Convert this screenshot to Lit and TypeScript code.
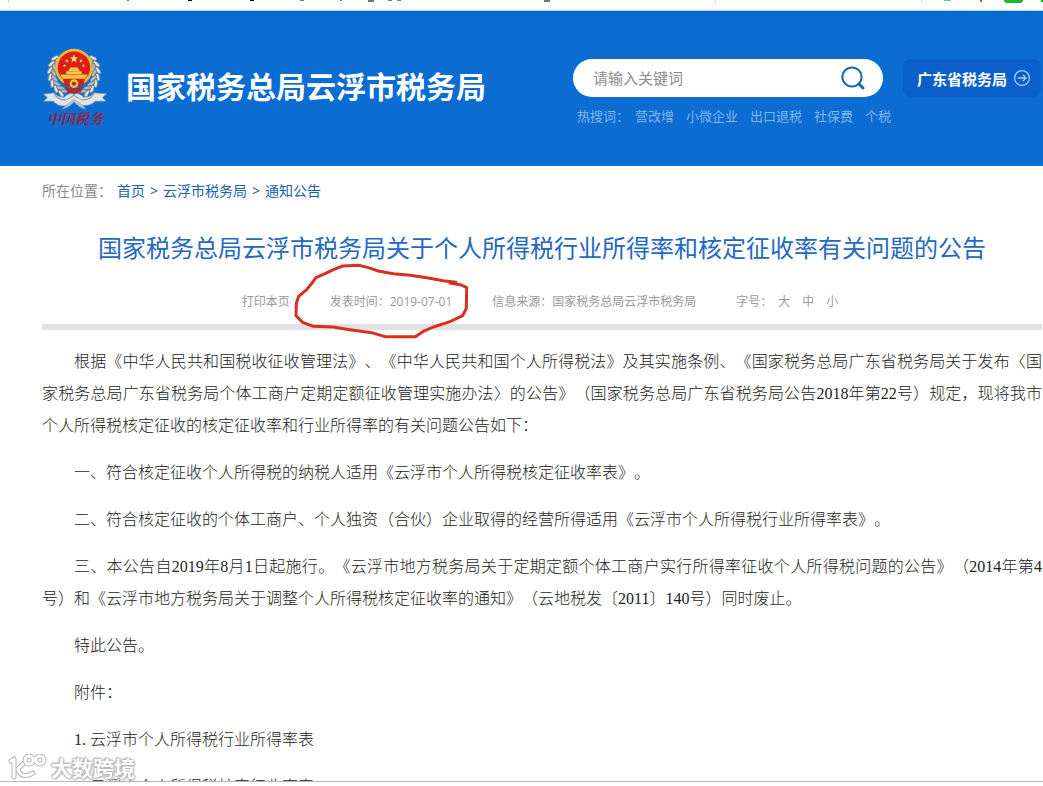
import { LitElement, html, css, svg } from "lit";
import { customElement } from "lit/decorators.js";

const HOT_WORDS = ["营改增", "小微企业", "出口退税", "社保费", "个税"];

const PARAGRAPHS = [
  "根据《中华人民共和国税收征收管理法》、《中华人民共和国个人所得税法》及其实施条例、《国家税务总局广东省税务局关于发布〈国家税务总局广东省税务局个体工商户定期定额征收管理实施办法〉的公告》（国家税务总局广东省税务局公告2018年第22号）规定，现将我市个人所得税核定征收的核定征收率和行业所得率的有关问题公告如下：",
  "一、符合核定征收个人所得税的纳税人适用《云浮市个人所得税核定征收率表》。",
  "二、符合核定征收的个体工商户、个人独资（合伙）企业取得的经营所得适用《云浮市个人所得税行业所得率表》。",
  "三、本公告自2019年8月1日起施行。《云浮市地方税务局关于定期定额个体工商户实行所得率征收个人所得税问题的公告》（2014年第4号）和《云浮市地方税务局关于调整个人所得税核定征收率的通知》（云地税发〔2011〕140号）同时废止。",
  "特此公告。",
  "附件：",
  "1. 云浮市个人所得税行业所得率表",
  "2. 云浮市个人所得税核定征收率表",
];

const star = (cx: number, cy: number, r: number) => {
  const pts: string[] = [];
  for (let i = 0; i < 10; i++) {
    const a = -Math.PI / 2 + (i * Math.PI) / 5;
    const q = i % 2 ? r * 0.42 : r;
    pts.push(`${(cx + q * Math.cos(a)).toFixed(1)},${(cy + q * Math.sin(a)).toFixed(1)}`);
  }
  return svg`<polygon points=${pts.join(" ")} fill="#ffe36a"/>`;
};

const leaf = (deg: number, r: number, tilt: number, fill: string) => {
  const a = (deg * Math.PI) / 180;
  const x = 133 + r * Math.cos(a);
  const y = 114 + r * Math.sin(a);
  return svg`<ellipse cx=${x.toFixed(1)} cy=${y.toFixed(1)} rx="12" ry="5" fill=${fill} stroke="#6d7c8c" stroke-width="2"
    transform=${`rotate(${deg + tilt} ${x.toFixed(1)} ${y.toFixed(1)})`}/>`;
};

@customElement("tax-emblem")
export class TaxEmblem extends LitElement {
  static styles = css`
    :host { display: flex; flex-direction: column; align-items: center; }
    .badge { display: block; width: 66px; height: 62px; }
    .caption {
      font: italic bold 14px/16px "Noto Serif CJK SC", "Noto Sans CJK SC", serif;
      color: #98203c;
    }
  `;
  render() {
    const right = [-38, -22, -6, 10, 26, 42, 58];
    return html`
      <svg class="badge" viewBox="38 40 196 184" aria-hidden="true">
        ${right.map((d) => [
          leaf(d, 72, 65, "#e6e4d8"),
          leaf(180 - d, 72, -65, "#e6e4d8"),
          leaf(d + 6, 60, 120, "#b4bbc0"),
          leaf(174 - d, 60, -120, "#b4bbc0"),
        ])}
        <circle cx="133" cy="98" r="56" fill="#e9b93a"/>
        <circle cx="133" cy="98" r="48" fill="#dc1f16"/>
        ${star(133, 72, 13)} ${star(112, 78, 6)} ${star(154, 78, 6)}
        ${star(105, 92, 5)} ${star(161, 92, 5)}
        <path d="M116 108 L122 98 H144 L150 108 Z M110 109 H156 V117 H110 Z" fill="#f5c94a"/>
        <path d="M92 119 H174 L167 131 H99 Z" fill="#f3c545"/>
        <path d="M100 133 Q133 158 166 133 L160 150 Q133 164 106 150 Z" fill="#c8201a"/>
        <circle cx="133" cy="146" r="13" fill="#efc04a"/>
        <circle cx="133" cy="146" r="6" fill="#c8201a"/>
        <path d="M106 154 Q133 168 160 154 L154 170 Q133 178 112 170 Z" fill="#c22019"/>
        <path d="M42 177 L74 173 Q84 186 104 186 Q120 170 133 178 Q146 170 162 186 Q184 186 192 173 L230 176 L218 187 L228 198 L196 198 Q180 214 158 210 Q144 206 133 194 Q122 206 108 212 Q84 214 72 198 L42 198 L54 187 Z"
          fill="#dfe4e8" stroke="#7a8a99" stroke-width="2"/>
        <path d="M74 175 Q84 194 108 194 Q122 190 133 180 Q144 190 158 194 Q182 194 192 175" fill="none" stroke="#8b97a3" stroke-width="3"/>
        <path d="M108 212 Q124 196 133 194 Q142 196 158 210 L170 222 Q146 216 133 200 Q120 216 96 222 Z" fill="#bcc5cd" stroke="#7a8a99"/>
      </svg>
      <span class="caption">中国税务</span>
    `;
  }
}

@customElement("site-header")
export class SiteHeader extends LitElement {
  static styles = css`
    :host { display: block; background: #0b6cd1; color: #fff; }
    .bar {
      display: flex; align-items: flex-start; justify-content: space-between;
      gap: 20px; padding: 37px 2px 40px 42px;
    }
    .brand { display: flex; align-items: center; gap: 18px; }
    .name { margin: 0; font-size: 30px; line-height: 40px; font-weight: 700; white-space: nowrap; }
    .tools { display: flex; align-items: flex-start; gap: 20px; padding-top: 11px; }
    .finder { width: 310px; }
    .search {
      display: flex; align-items: center; height: 38px; box-sizing: border-box;
      padding: 0 16px 0 20px; border-radius: 19px; background: #fff;
    }
    .field {
      flex: 1; min-width: 0; border: 0; padding: 0; outline: 0; background: none;
      font: inherit; font-size: 15px; line-height: 24px; color: #333;
    }
    .field::placeholder { color: #8c8c8c; opacity: 1; }
    .go { display: flex; border: 0; padding: 0; background: none; cursor: pointer; }
    .go svg { width: 28px; height: 28px; }
    .hot {
      display: flex; gap: 12px; margin-top: 9px; padding-left: 4px;
      font-size: 13px; line-height: 20px; color: #82b7ec; white-space: nowrap;
    }
    .hot span { margin-right: -6px; }
    .hot a { color: inherit; text-decoration: none; }
    .province {
      display: flex; align-items: center; gap: 6px; height: 38px; padding: 0 10px 0 14px;
      border-radius: 8px; background: #0a5fca; color: #fff; text-decoration: none;
      font-size: 15px; font-weight: 700; white-space: nowrap;
    }
    .province svg { width: 18px; height: 18px; }
  `;
  render() {
    return html`
      <header class="bar">
        <div class="brand">
          <tax-emblem></tax-emblem>
          <p class="name">国家税务总局云浮市税务局</p>
        </div>
        <div class="tools">
          <div class="finder">
            <form class="search" @submit=${(e: Event) => e.preventDefault()}>
              <input class="field" type="text" aria-label="请输入关键词" placeholder="请输入关键词" />
              <button class="go" type="submit" aria-label="搜索">
                <svg viewBox="0 0 28 28" fill="none" stroke="#1668b8">
                  <circle cx="13" cy="13" r="9.6" stroke-width="2"/>
                  <path d="M20 20 L24 24" stroke-width="3" stroke-linecap="round"/>
                </svg>
              </button>
            </form>
            <nav class="hot"><span>热搜词：</span>${HOT_WORDS.map((w) => html`<a href="#">${w}</a>`)}</nav>
          </div>
          <a class="province" href="#">广东省税务局
            <svg viewBox="0 0 18 18" fill="none" stroke="#a9d0f7" stroke-width="1.3" aria-hidden="true">
              <circle cx="9" cy="9" r="7.4"/><path d="M4.8 9 H13 M10 6 L13 9 L10 12"/>
            </svg>
          </a>
        </div>
      </header>
    `;
  }
}

@customElement("notice-article")
export class NoticeArticle extends LitElement {
  static styles = css`
    :host { display: block; padding: 15px 1px 0 42px; }
    a { color: inherit; text-decoration: none; }
    .crumbs { display: flex; gap: 5px; font-size: 14px; line-height: 20px; color: #1b62a8; }
    .where { color: #8a8a8a; }
    .title {
      margin: 29px 0 26px; text-align: center; font-size: 24px; line-height: 36px;
      font-weight: 400; color: #2468bf;
    }
    .meta {
      display: flex; justify-content: center; gap: 40px; padding: 0 4px 12px 0;
      border-bottom: 6px solid #e2e2e2; font-size: 12px; line-height: 20px; color: #999;
    }
    .print, .size {
      border: 0; padding: 0; background: none; font: inherit; color: inherit; cursor: pointer;
    }
    .sizes { display: flex; gap: 12px; }
    .sizes span { margin-right: -6px; }
    .date { position: relative; }
    .ring {
      position: absolute; left: -36px; top: -28px; width: 176px; height: 75px;
      overflow: visible; pointer-events: none;
    }
    .text {
      padding-top: 16px; color: #222; font: 16px/32px "Liberation Serif", "Noto Sans CJK SC", serif;
      font-weight: 300;
    }
    .text p { margin: 0 0 15px; text-indent: 2em; text-align: justify; }
  `;
  render() {
    return html`
      <nav class="crumbs">
        <span class="where">所在位置：</span><a href="#">首页</a><span>&gt;</span
        ><a href="#">云浮市税务局</a><span>&gt;</span><a href="#">通知公告</a>
      </nav>
      <h1 class="title">国家税务总局云浮市税务局关于个人所得税行业所得率和核定征收率有关问题的公告</h1>
      <div class="meta">
        <button class="print" type="button">打印本页</button>
        <span class="date">发表时间：2019-07-01
          <svg class="ring" viewBox="882 297 528 225" fill="none" stroke="#d8301f" stroke-width="9"
            stroke-linejoin="round" stroke-linecap="round" aria-hidden="true">
            <path d="M1368 352 L1330 347 L1285 339 L1230 331 L1180 326 L1135 318 L1105 308 L1078 301 L1028 303 L1000 314 L975 326 L948 338 L936 354 L920 374 L896 394 L889 415 L888 452 L908 472 L940 484 L1000 486 L1050 494 L1115 503 L1155 515 L1246 515 L1268 500 L1300 486 L1350 470 L1388 452 L1399 430 L1400 368 L1384 360 L1350 354"/>
          </svg>
        </span>
        <span>信息来源：国家税务总局云浮市税务局</span>
        <div class="sizes">
          <span>字号：</span>
          ${["大", "中", "小"].map((s) => html`<button class="size" type="button">${s}</button>`)}
        </div>
      </div>
      <div class="text">${PARAGRAPHS.map((p) => html`<p>${p}</p>`)}</div>
    `;
  }
}

@customElement("app-root")
export class AppRoot extends LitElement {
  static styles = css`
    :host {
      display: flex; flex-direction: column; height: 100vh; position: relative; overflow: hidden;
      background: #fff; font-family: "Open Sans", "Noto Sans CJK SC", sans-serif;
      text-spacing-trim: space-all;
    }
    .strip { flex: none; height: 10px; border-bottom: 1px solid #a9d3f5; overflow: hidden; }
    .strip svg { display: block; width: 1043px; height: 3px; }
    .view { flex: 1; min-height: 0; overflow: hidden; border-bottom: 1px solid #b5b5b5; margin-bottom: 4px; }
    .mark {
      position: absolute; left: 8px; bottom: 4px; display: flex; align-items: center; gap: 3px;
      font-size: 21px; line-height: 28px; font-weight: 700; color: #fff;
      text-shadow: 0 0 1px #aaa, 0 0 2px #aaa, 0 0 3px #bbb, 1px 1px 2px #bbb, -1px -1px 2px #bbb;
    }
    .mark svg { width: 40px; height: 28px; }
  `;
  render() {
    const logo = svg`
      <path d="M3 7 L6 5 V23 M15 10 L10 15 C11 21 18 24 25 19"/>
      <circle cx="21" cy="6" r="4"/><circle cx="32" cy="6" r="4"/><path d="M24 9 L29 3"/>`;
    return html`
      <div class="strip">
        <svg viewBox="0 0 1043 3" aria-hidden="true">
          <path d="M8 0h1v3h-1z M715 0h1v3h-1z M921 0h1v3h-1z" fill="#d5d5d5"/>
          <path d="M127 0h2v1h-2z M300 0h4v1h-4z M340 0h2v1h-2z M368 0h6v2h-6z M388 0h4v1h-4z M397 0h4v1h-4z M544 0h6v2h-6z" fill="#777"/>
          <path d="M188 0h4v1h-4z M250 0h4v1h-4z" fill="#111"/>
          <path d="M944 0h7v1h-7z" fill="#6cc7a0"/>
          <path d="M980 0h2v2h-2z" fill="#e04a4a"/>
          <path d="M1004 0h19v1l-2 2h-15l-2-2z M1041 0h2v2h-2z" fill="#1fb636"/>
        </svg>
      </div>
      <main class="view">
        <site-header></site-header>
        <notice-article></notice-article>
      </main>
      <div class="mark">
        <svg viewBox="0 0 40 28" fill="none" stroke-linecap="round" stroke-linejoin="round" aria-hidden="true">
          <g stroke="#b4b4b4" stroke-width="5">${logo}</g>
          <g stroke="#fff" stroke-width="3">${logo}</g>
        </svg>
        <span>大数跨境</span>
      </div>
    `;
  }
}
